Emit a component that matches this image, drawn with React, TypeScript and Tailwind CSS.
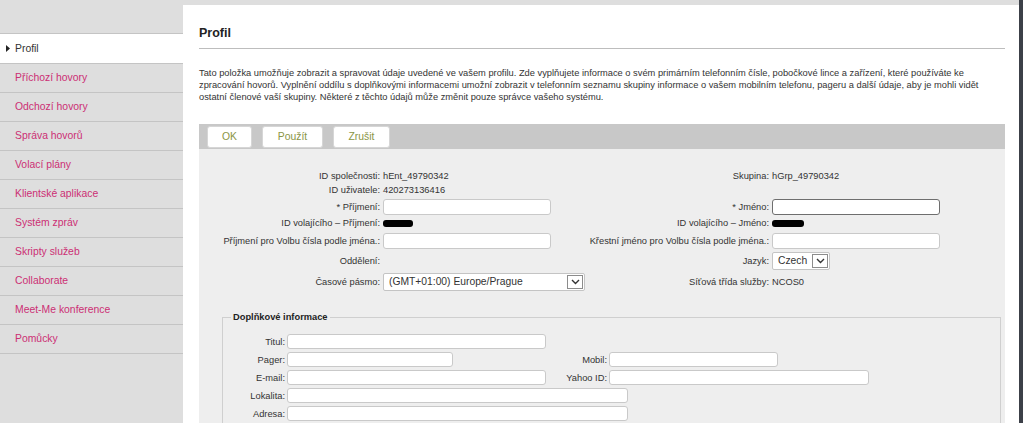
import React from "react";

const navItems = [
  "Příchozí hovory",
  "Odchozí hovory",
  "Správa hovorů",
  "Volací plány",
  "Klientské aplikace",
  "Systém zpráv",
  "Skripty služeb",
  "Collaborate",
  "Meet-Me konference",
  "Pomůcky",
];

function Box({ className }: { className: string }) {
  return <div className={`bg-white border rounded-[3px] ${className}`} />;
}

function Chevron({ className }: { className: string }) {
  return (
    <span className={`flex items-center justify-center border border-[#8c8c8c] bg-white ${className}`}>
      <svg width="9" height="6" viewBox="0 0 9 6">
        <path d="M1 1l3.5 3.5L8 1" fill="none" stroke="#333" strokeWidth="1.4" />
      </svg>
    </span>
  );
}

function Redact({ className }: { className: string }) {
  return <span className={`block bg-black rounded-[3px] ${className}`} />;
}

function Row({
  cls,
  l1,
  c1,
  l2,
  c2,
}: {
  cls: string;
  l1?: string;
  c1?: React.ReactNode;
  l2?: string;
  c2?: React.ReactNode;
}) {
  return (
    <div className={`grid grid-cols-[184px_203px_186px_1fr] items-center ${cls}`}>
      <div className="text-right pr-[3px] whitespace-nowrap">{l1}</div>
      <div className="flex items-center">{c1}</div>
      <div className="text-right pr-[3px] whitespace-nowrap">{l2}</div>
      <div className="flex items-center">{c2}</div>
    </div>
  );
}

export default function App() {
  return (
    <div className="flex h-[423px] w-[1023px] overflow-hidden bg-[#dedede] font-['Liberation_Sans',Arial,sans-serif] text-[#333]">
      {/* Sidebar */}
      <div className="w-[183px] shrink-0 pt-[33px]">
        <div className="border-t border-[#c4c4c4]">
          <div className="flex h-[30px] items-center border-b border-[#c4c4c4] bg-white pl-[6px] text-[10.4px] text-[#333]">
            <svg width="4" height="7" viewBox="0 0 4 7">
              <path d="M0 0L4 3.5L0 7Z" fill="#222" />
            </svg>
            <span className="ml-[5px]">Profil</span>
          </div>
          {navItems.map((t) => (
            <div
              key={t}
              className="flex h-[29px] items-center border-b border-[#c4c4c4] pl-[15px] text-[10.4px] text-[#cc2f74]"
            >
              {t}
            </div>
          ))}
        </div>
      </div>

      {/* Main panel */}
      <div className="mt-[5px] flex-1 bg-white pl-[16px] pr-[14px]">
        <div className="border-b border-[#bdbdbd] pt-[21px] pb-[7px] text-[12.5px] font-bold leading-[15px] text-[#222]">
          Profil
        </div>
        <div className="mt-[18px] whitespace-nowrap text-[9.3px] leading-[12px]">
          <div>
            Tato položka umožňuje zobrazit a spravovat údaje uvedené ve vašem profilu. Zde vyplňujete informace o svém primárním telefonním čísle, pobočkové lince a zařízení, které používáte ke
          </div>
          <div>
            zpracování hovorů. Vyplnění oddílu s doplňkovými informacemi umožní zobrazit v telefonním seznamu skupiny informace o vašem mobilním telefonu, pageru a další údaje, aby je mohli vidět
          </div>
          <div>ostatní členové vaší skupiny. Některé z těchto údajů může změnit pouze správce vašeho systému.</div>
        </div>

        {/* Button bar */}
        <div className="mt-[21px] flex h-[25px] items-start gap-[10px] bg-[#c8c8c8] pl-[8px] pt-[2px]">
          {[
            ["OK", "w-[45px]"],
            ["Použít", "w-[61px]"],
            ["Zrušit", "w-[57px]"],
          ].map(([t, w]) => (
            <div
              key={t}
              className={`flex h-[22px] items-center justify-center rounded-[3px] border border-[#d6d6d6] bg-white text-[10.4px] text-[#8a9545] ${w}`}
            >
              {t}
            </div>
          ))}
        </div>

        {/* Form */}
        <div className="h-[300px] bg-[#eeeeee] pt-[20px] text-[9.3px] leading-[12px]">
          <Row cls="h-[14px]" l1="ID společnosti:" c1="hEnt_49790342" l2="Skupina:" c2="hGrp_49790342" />
          <Row cls="h-[14px]" l1="ID uživatele:" c1="420273136416" />
          <Row
            cls="h-[16px] mt-[2px]"
            l1="* Příjmení:"
            c1={<Box className="h-[16px] w-[168px] border-[#c9c9c9]" />}
            l2="* Jméno:"
            c2={<Box className="h-[16px] w-[168px] border-[#6e6e6e]" />}
          />
          <Row
            cls="h-[14px] mt-[1px]"
            l1="ID volajícího – Příjmení:"
            c1={<Redact className="h-[7px] w-[30px]" />}
            l2="ID volajícího – Jméno:"
            c2={<Redact className="h-[7px] w-[32px]" />}
          />
          <Row
            cls="h-[16px] mt-[3px]"
            l1="Příjmení pro Volbu čísla podle jména.:"
            c1={<Box className="h-[16px] w-[168px] border-[#c9c9c9]" />}
            l2="Křestní jméno pro Volbu čísla podle jména.:"
            c2={<Box className="h-[16px] w-[168px] border-[#c9c9c9]" />}
          />
          <Row
            cls="h-[18px] mt-[3px]"
            l1="Oddělení:"
            l2="Jazyk:"
            c2={
              <div className="flex h-[18px] w-[58px] items-center justify-between rounded-[2px] border border-[#c4c4c4] bg-white pl-[5px] pr-[1px] text-[10.3px]">
                <span>Czech</span>
                <Chevron className="h-[14px] w-[16px]" />
              </div>
            }
          />
          <Row
            cls="h-[18px] mt-[3px]"
            l1="Časové pásmo:"
            c1={
              <div className="flex h-[18px] w-[202px] items-center justify-between rounded-[2px] border border-[#c4c4c4] bg-white pl-[5px] pr-[1px] text-[10.3px]">
                <span>(GMT+01:00) Europe/Prague</span>
                <Chevron className="h-[14px] w-[16px]" />
              </div>
            }
            l2="Síťová třída služby:"
            c2="NCOS0"
          />

          {/* Fieldset */}
          <fieldset className="ml-[23px] mr-[4px] mt-[20px] border border-[#cfcfcf] pb-[10px] pt-[11px]">
            <legend className="ml-[8px] px-[2px] font-bold leading-[12px] text-[#222]">Doplňkové informace</legend>
            <div className="grid grid-cols-[64px_259px_63px_1fr] auto-rows-[15px] items-center gap-y-[3px]">
              <div className="pr-[2px] text-right">Titul:</div>
              <Box className="h-[15px] w-[259px] border-[#c9c9c9]" />
              <div />
              <div />

              <div className="pr-[2px] text-right">Pager:</div>
              <Box className="h-[15px] w-[166px] border-[#c9c9c9]" />
              <div className="pr-[2px] text-right">Mobil:</div>
              <Box className="h-[15px] w-[169px] border-[#c9c9c9]" />

              <div className="pr-[2px] text-right">E-mail:</div>
              <Box className="h-[15px] w-[259px] border-[#c9c9c9]" />
              <div className="pr-[2px] text-right whitespace-nowrap">Yahoo ID:</div>
              <Box className="h-[15px] w-[260px] border-[#c9c9c9]" />

              <div className="pr-[2px] text-right">Lokalita:</div>
              <div className="col-span-3">
                <Box className="h-[15px] w-[341px] border-[#c9c9c9]" />
              </div>

              <div className="pr-[2px] text-right">Adresa:</div>
              <div className="col-span-3">
                <Box className="h-[15px] w-[341px] border-[#c9c9c9]" />
              </div>
            </div>
          </fieldset>
        </div>
      </div>

      {/* Right dark edge */}
      <div className="w-[4px] shrink-0 bg-[#3c4048]" />
    </div>
  );
}
